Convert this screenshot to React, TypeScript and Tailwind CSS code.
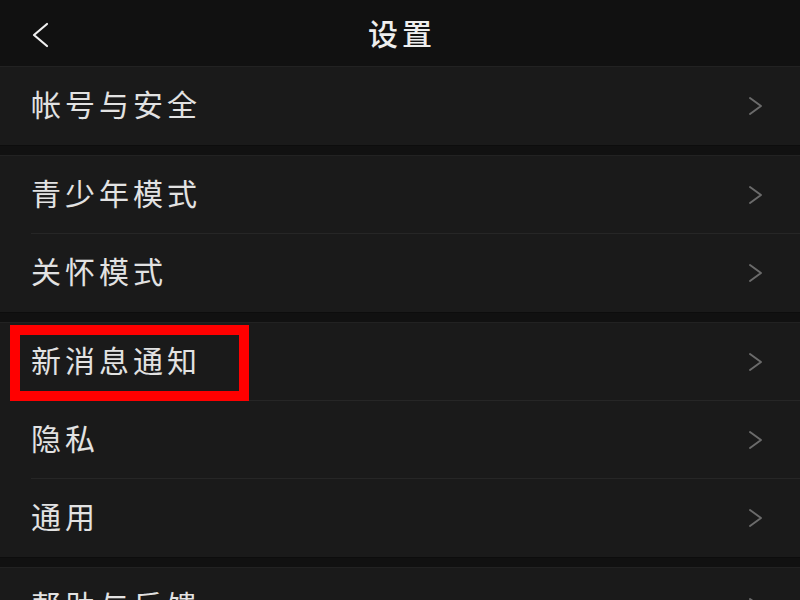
import React from "react";

const Chevron = () => (
  <svg width="18" height="20" viewBox="0 0 18 20" fill="none" className="shrink-0">
    <path d="M3 2 L14 10 L3 18" stroke="#6b6b6b" strokeWidth="2" strokeLinecap="round" strokeLinejoin="round" />
  </svg>
);

const Row = ({ label, divider }: { label: string; divider?: boolean }) => (
  <div className="relative shrink-0 h-[78px] flex items-center pl-[31px] pr-[35px] bg-[#1a1a1a]">
    <span className="flex-1 mb-[6px] text-[30px] tracking-[4px] text-[#e2e2e2] leading-none">{label}</span>
    <Chevron />
    {divider && <div className="absolute left-[31px] right-0 bottom-0 h-px bg-[#262626]" />}
  </div>
);

const Gap = () => (
  <div className="shrink-0 h-[11px] bg-[#111111] border-t border-[#0d0d0d] border-b border-b-[#222222]" />
);

export default function App() {
  return (
    <div
      className="relative w-[800px] h-[600px] overflow-hidden bg-[#111111] flex flex-col"
      style={{ fontFamily: '"Noto Sans CJK SC", "Noto Sans", sans-serif' }}
    >
      <div className="h-[67px] shrink-0 relative flex items-center justify-center bg-[#111111] border-b border-[#222222]">
        <svg width="20" height="26" viewBox="0 0 20 26" fill="none" className="absolute left-[31px] top-[22px]">
          <path d="M16 2 L3 13 L16 24" stroke="#f0f0f0" strokeWidth="2.2" strokeLinecap="round" strokeLinejoin="round" />
        </svg>
        <span className="text-[30px] tracking-[4px] font-medium text-[#eeeeee] leading-none pl-[4px] mb-[2px]">设置</span>
      </div>
      <Row label="帐号与安全" />
      <Gap />
      <Row label="青少年模式" divider />
      <Row label="关怀模式" />
      <Gap />
      <Row label="新消息通知" divider />
      <Row label="隐私" divider />
      <Row label="通用" />
      <Gap />
      <Row label="帮助与反馈" />
      <div className="absolute left-[10px] top-[325px] w-[239px] h-[76px] border-[10px] border-[#ff0000]" />
    </div>
  );
}
